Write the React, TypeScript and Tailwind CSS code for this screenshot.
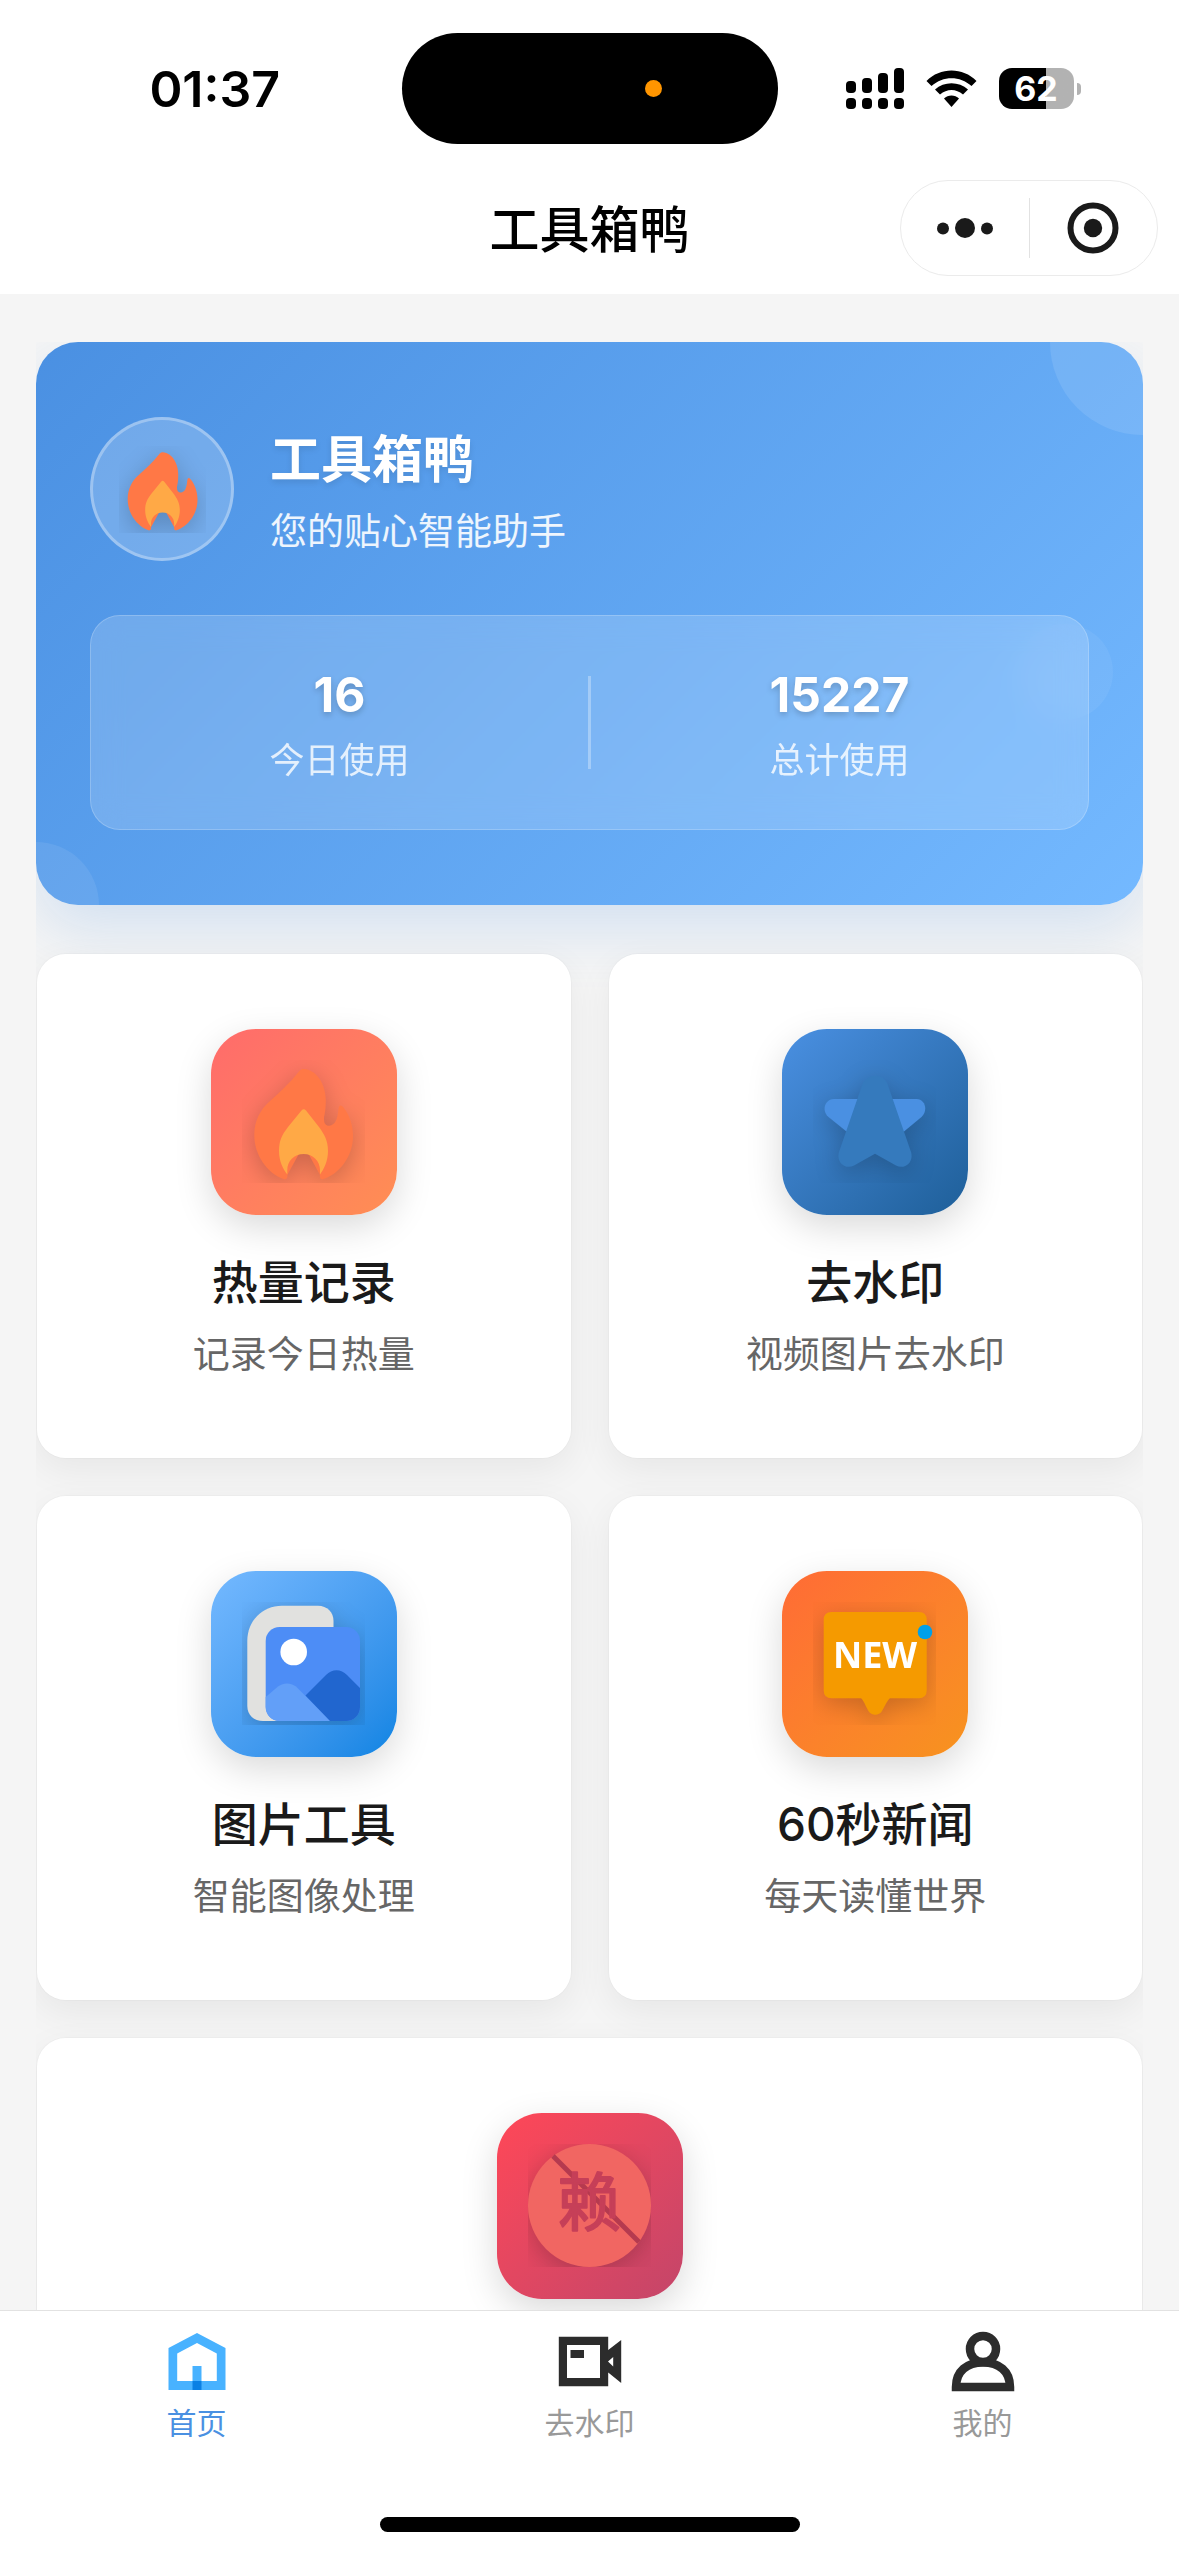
import { ReactNode, useState } from "react";
import clsx from "clsx";

const FlameIcon = () => (
  <svg viewBox="0 0 123 123" className="w-full h-full" aria-hidden="true">
    <path
      fill="#ff7846"
      d="M61.7 9C76 10 86 27 83.5 48C83 54 82 56 82 59C82 64 84 66 87.5 65.7C93 65 95.500 60 96.500 49C97 44.500 99.500 44.500 101.500 47.500C107.500 55 111 65 111 76C111 97 97 114 81.500 119C79 120 77.500 118 78 115L61.700 85L45.300 115C46 118 44 120 41.500 119C25 113 12.300 95 12.300 75C12.300 61 18 50 27.500 41.500C38 32 48 23 56.500 12C58.500 9.500 60 9 61.700 9Z"
    />
    <path
      fill="#ffa946"
      d="M59.500 50.500Q61.700 48 64 50.500L77 67C82 74 86 80 86 91C86 101 82 109 78 114.500V110C78 101 71 94 61.700 94C52 94 45.300 101 45.300 110V114.500C41 109 37 101 37 91C37 80 40 75 46 67Z"
    />
  </svg>
);

const StarIcon = () => (
  <svg viewBox="0 0 123 123" className="w-full h-full" aria-hidden="true">
    <path
      fill="#4a90e2"
      d="M21 39H103.500C112 39 115.500 50.500 108.500 57L91 71.500H33.500L15.500 57C8 50.500 12 39 21 39Z"
    />
    <path
      fill="#357abd"
      d="M49.500 24C54 13 70 13 74.500 24L98 92C101 102 92 110 83 105.500L62 93.700L41 105.500C32 110 23 102 26 92Z"
    />
  </svg>
);

const PictureIcon = () => (
  <svg viewBox="0 0 123 123" className="w-full h-full" aria-hidden="true">
    <path
      fill="#e1e1df"
      d="M40 3.700H76C85 3.700 91.500 10 91.500 19V60L60 119H21C12 119 5.300 113 5.300 104V39C5.300 19 20 3.700 40 3.700Z"
    />
    <rect x="23.700" y="25" width="94.300" height="94" rx="14" fill="#4d8df6" />
    <path
      fill="#629ff8"
      d="M23.700 95L36 84.500C42 80.500 48 80.500 54 84.500L88.500 119H37.700C30 119 23.700 113 23.700 105Z"
    />
    <path
      fill="#2166cf"
      d="M63.500 93.500L84 73C90 66.500 99 66.500 105 73L118 86V105C118 113 112 119 104 119H88Z"
    />
    <circle cx="51.700" cy="50" r="13.300" fill="#fff" />
  </svg>
);

const NewsIcon = () => (
  <svg viewBox="0 0 123 123" className="w-full h-full" aria-hidden="true">
    <path
      fill="#f59a00"
      d="M18.700 10H105.700Q113.700 10 113.700 18V88.300Q113.700 96.300 105.700 96.300H77C74.500 98 72 104 69 109C66 114 58.500 114 55.500 109C52.500 104 50.500 98 48 96.300H18.700Q10.700 96.300 10.700 88.300V18Q10.700 10 18.700 10Z"
    />
    <text
      x="62"
      y="66"
      textAnchor="middle"
      fill="#fff"
      className="font-['Noto_Sans',sans-serif] text-[36px] font-bold"
    >
      NEW
    </text>
    <circle cx="112" cy="30" r="7.300" fill="#00a0e9" />
  </svg>
);

const LaiIcon = () => (
  <svg viewBox="0 0 123 123" className="w-full h-full" aria-hidden="true">
    <circle cx="61.500" cy="61.500" r="61.500" fill="#f16662" />
    <path d="M25 12L111 98" stroke="#b53a4f" strokeWidth="5" />
    <text
      x="61"
      y="81"
      textAnchor="middle"
      fill="#c63f58"
      stroke="#c63f58"
      strokeWidth="2"
      strokeLinejoin="round"
      className="font-['Noto_Sans_CJK_SC',sans-serif] text-[63px] font-normal"
    >
      赖
    </text>
  </svg>
);

const HomeIcon = () => (
  <svg viewBox="0 0 72 72" className="size-[72px]" aria-hidden="true">
    <path
      fill="#48b2ff"
      fillRule="evenodd"
      d="M36 8L64.500 23V65H7.500V23ZM36 18L16.200 28.500V56H55.800V28.500Z"
    />
    <path fill="#48b2ff" d="M31.500 41H40.500V56H31.500Z" />
    <path fill="#0a80e4" d="M31.500 56H40.500V65H31.500Z" />
  </svg>
);

const VideoIcon = () => (
  <svg viewBox="0 0 72 72" className="size-[72px]" aria-hidden="true">
    <path
      fill="#2c2c2c"
      fillRule="evenodd"
      d="M4.800 11.700H54.200V25L67.200 15V58L54.200 47.500V61.200H4.800ZM13 20V53H46V20ZM54 36.500L59.200 41.500V32Z"
    />
    <path fill="#2c2c2c" d="M16.500 25H30V33H16.500Z" />
  </svg>
);

const UserIcon = () => (
  <svg viewBox="0 0 72 72" className="size-[72px]" aria-hidden="true">
    <circle cx="36" cy="24" r="13" fill="none" stroke="#2c2c2c" strokeWidth="8.500" />
    <path
      d="M9 62C9 46 20 37.500 36 37.500C52 37.500 63 46 63 62Z"
      fill="none"
      stroke="#2c2c2c"
      strokeWidth="8.500"
    />
  </svg>
);

const tools: {
  title?: string;
  desc?: string;
  bg: string;
  wide?: boolean;
  icon: ReactNode;
}[] = [
  {
    title: "热量记录",
    desc: "记录今日热量",
    bg: "bg-linear-135 from-[#ff6b6b] to-[#ff8e53]",
    icon: <FlameIcon />,
  },
  {
    title: "去水印",
    desc: "视频图片去水印",
    bg: "bg-linear-135 from-[#4a90e2] to-[#1e5f99]",
    icon: <StarIcon />,
  },
  {
    title: "图片工具",
    desc: "智能图像处理",
    bg: "bg-linear-135 from-[#74b9ff] to-[#0984e3]",
    icon: <PictureIcon />,
  },
  {
    title: "60秒新闻",
    desc: "每天读懂世界",
    bg: "bg-linear-135 from-[#ff6b35] to-[#f7931e]",
    icon: <NewsIcon />,
  },
  {
    bg: "bg-linear-135 from-[#ff4757] to-[#c44569]",
    wide: true,
    icon: <LaiIcon />,
  },
];

const stats = [
  { label: "今日使用", value: "16" },
  { label: "总计使用", value: "15227" },
];

const tabs = [
  { id: "home", label: "首页", icon: <HomeIcon /> },
  { id: "watermark", label: "去水印", icon: <VideoIcon /> },
  { id: "mine", label: "我的", icon: <UserIcon /> },
];

const StatusBar = () => (
  <div className="grid grid-cols-[1fr_376px_1fr] items-center pt-[33px]">
    <div className="pl-7 text-center text-[50px] leading-[60px] font-semibold text-black">
      01:37
    </div>
    <div className="flex h-[111px] items-center justify-end rounded-full bg-black pr-[116px]">
      <span className="size-[17px] rounded-full bg-[#ff9500]"></span>
    </div>
    <div className="flex items-center gap-[22px] pl-[68px]">
      <svg viewBox="0 0 58 41" className="h-[41px] w-[58px]" aria-hidden="true">
        <rect x="0" y="13" width="10" height="12" rx="4" />
        <rect x="16" y="10" width="10" height="15" rx="4" />
        <rect x="32" y="5" width="10" height="20" rx="4" />
        <rect x="48" y="0" width="10" height="25" rx="4" />
        <rect x="0" y="30" width="10" height="11" rx="4" />
        <rect x="16" y="30" width="10" height="11" rx="4" />
        <rect x="32" y="30" width="10" height="11" rx="4" />
        <rect x="48" y="30" width="10" height="11" rx="4" />
      </svg>
      <svg viewBox="0 0 51 38" className="h-[38px] w-[51px]" aria-hidden="true">
        <path d="M0.500 11C14 -3 37 -3 50.500 11L45.500 16C34 5.500 17 5.500 5.500 16Z" />
        <path d="M9 19.500C18 11 33 11 42 19.500L37 24.500C30 18.500 21 18.500 14 24.500Z" />
        <path d="M18 28.500C22 24.500 29 24.500 33 28.500L25.500 37Z" />
      </svg>
      <div className="flex items-center gap-[3px]">
        <div className="flex h-[41px] w-[75px] items-center justify-center rounded-[13px] bg-linear-to-r from-black from-63% to-[#b2b2b2] to-63% text-[34px] leading-[41px] font-bold text-white">
          62
        </div>
        <span className="h-3 w-1 rounded-r-full bg-[#b2b2b2]"></span>
      </div>
    </div>
  </div>
);

const TitleBar = () => (
  <div className="grid grid-cols-[1fr_auto_1fr] items-center pt-9 pb-[18px]">
    <h1 className="col-start-2 pt-1 text-center text-[50px] leading-[60px] font-medium text-black">
      工具箱鸭
    </h1>
    <div className="mr-[21px] flex h-[96px] w-[258px] items-center justify-self-end rounded-full border border-[#ebebeb]">
      <button type="button" aria-label="更多" className="flex flex-1 justify-center">
        <svg viewBox="0 0 58 20" className="h-5 w-[58px]" fill="#1a1a1a">
          <circle cx="7" cy="10.500" r="6" />
          <circle cx="29" cy="10" r="10" />
          <circle cx="51" cy="10.500" r="6" />
        </svg>
      </button>
      <span className="h-[60px] w-px bg-[#e2e2e2]"></span>
      <button type="button" aria-label="关闭" className="flex flex-1 justify-center">
        <svg viewBox="0 0 52 52" className="size-[52px]">
          <circle cx="26" cy="26" r="22.500" fill="none" stroke="#1a1a1a" strokeWidth="6" />
          <circle cx="26" cy="26" r="9.200" fill="#1a1a1a" />
        </svg>
      </button>
    </div>
  </div>
);

const Hero = () => (
  <section className="rounded-[42px] shadow-[0_24px_60px_rgba(74,144,226,0.2)]">
    <div className="relative overflow-hidden rounded-[42px] bg-linear-135 from-[#4a90e2] to-[#74b9ff] px-[54px] py-[75px]">
      <span className="absolute -top-[93px] -right-[93px] size-[186px] rounded-full bg-white/10"></span>
      <span className="absolute -bottom-[63px] -left-[63px] size-[126px] rounded-full bg-white/8"></span>
      <span className="absolute top-1/2 right-[30px] size-[96px] rounded-full bg-white/6"></span>

      <div className="flex items-center gap-9">
        <div className="flex size-[144px] items-center justify-center rounded-full border-3 border-white/30 bg-white/20">
          <div className="size-[87px] overflow-hidden">
            <div className="size-full drop-shadow-[0_6px_12px_rgba(0,0,0,0.2)]">
              <FlameIcon />
            </div>
          </div>
        </div>
        <div className="pt-2 text-white">
          <h2 className="text-[51px] leading-[60px] font-bold text-shadow-[0_3px_6px_rgba(0,0,0,0.1)]">
            工具箱鸭
          </h2>
          <p className="mt-[18px] text-[37px] leading-[48px] text-white/90">
            您的贴心智能助手
          </p>
        </div>
      </div>

      <div className="relative mt-[54px] flex items-center rounded-[30px] border border-white/20 bg-white/17 py-[45px] backdrop-blur-[15px]">
        {stats.map((stat, index) => (
          <div key={stat.label} className="contents">
            {index > 0 && <span className="h-[93px] w-[3px] bg-white/30"></span>}
            <div className="flex-1 pt-1 text-center text-white">
              <div className="text-[48px] leading-[60px] font-bold text-shadow-[0_3px_6px_rgba(0,0,0,0.2)]">
                {stat.value}
              </div>
              <div className="mt-[11px] text-[35px] leading-[48px] text-white/80">
                {stat.label}
              </div>
            </div>
          </div>
        ))}
      </div>
    </div>
  </section>
);

const App = () => {
  const [activeTab, setActiveTab] = useState("home");

  return (
    <div className="flex h-screen flex-col bg-[#f5f5f5] font-['Inter','Noto_Sans_CJK_SC',sans-serif]">
      <header className="bg-white">
        <StatusBar />
        <TitleBar />
      </header>

      <main className="min-h-0 flex-1 overflow-y-auto px-9 pt-12 [scrollbar-width:none]">
        <div className="overflow-hidden">
          <Hero />
          <div className="mt-12 grid grid-cols-2 gap-9">
            {tools.map((tool, index) => (
              <button
                key={index}
                type="button"
                className={clsx(
                  "flex flex-col items-center rounded-[30px] border border-black/2 bg-white bg-clip-padding pt-[75px] pb-[79px] shadow-[0_12px_36px_rgba(0,0,0,0.06)]",
                  tool.wide && "col-span-2"
                )}
              >
                <span
                  className={clsx(
                    "flex size-[186px] items-center justify-center rounded-[45px] pr-px pb-px shadow-[0_12px_36px_rgba(0,0,0,0.15)]",
                    tool.bg
                  )}
                >
                  <span className="block size-[123px] overflow-hidden">
                    <span className="block size-full drop-shadow-[0_6px_12px_rgba(0,0,0,0.2)]">
                      {tool.icon}
                    </span>
                  </span>
                </span>
                {tool.title && (
                  <span className="mt-9 text-[46px] leading-[62px] font-medium text-[#1a1a1a]">
                    {tool.title}
                  </span>
                )}
                {tool.desc && (
                  <span className="mt-[18px] text-[37px] leading-[48px] text-[#666]">
                    {tool.desc}
                  </span>
                )}
              </button>
            ))}
          </div>
        </div>
      </main>

      <nav className="border-t border-[#e2e2e2] bg-white">
        <div className="grid grid-cols-3 pt-[14px]">
          {tabs.map((tab) => (
            <button
              key={tab.id}
              type="button"
              onClick={() => setActiveTab(tab.id)}
              className={clsx(
                "flex flex-col items-center text-[30px] leading-[40px]",
                activeTab === tab.id ? "text-[#4a90e2]" : "text-[#999]"
              )}
            >
              {tab.icon}
              <span className="mt-[6px]">{tab.label}</span>
            </button>
          ))}
        </div>
        <div className="mx-auto mt-[74px] mb-6 h-[15px] w-[420px] rounded-full bg-black"></div>
      </nav>
    </div>
  );
};

export default App;
